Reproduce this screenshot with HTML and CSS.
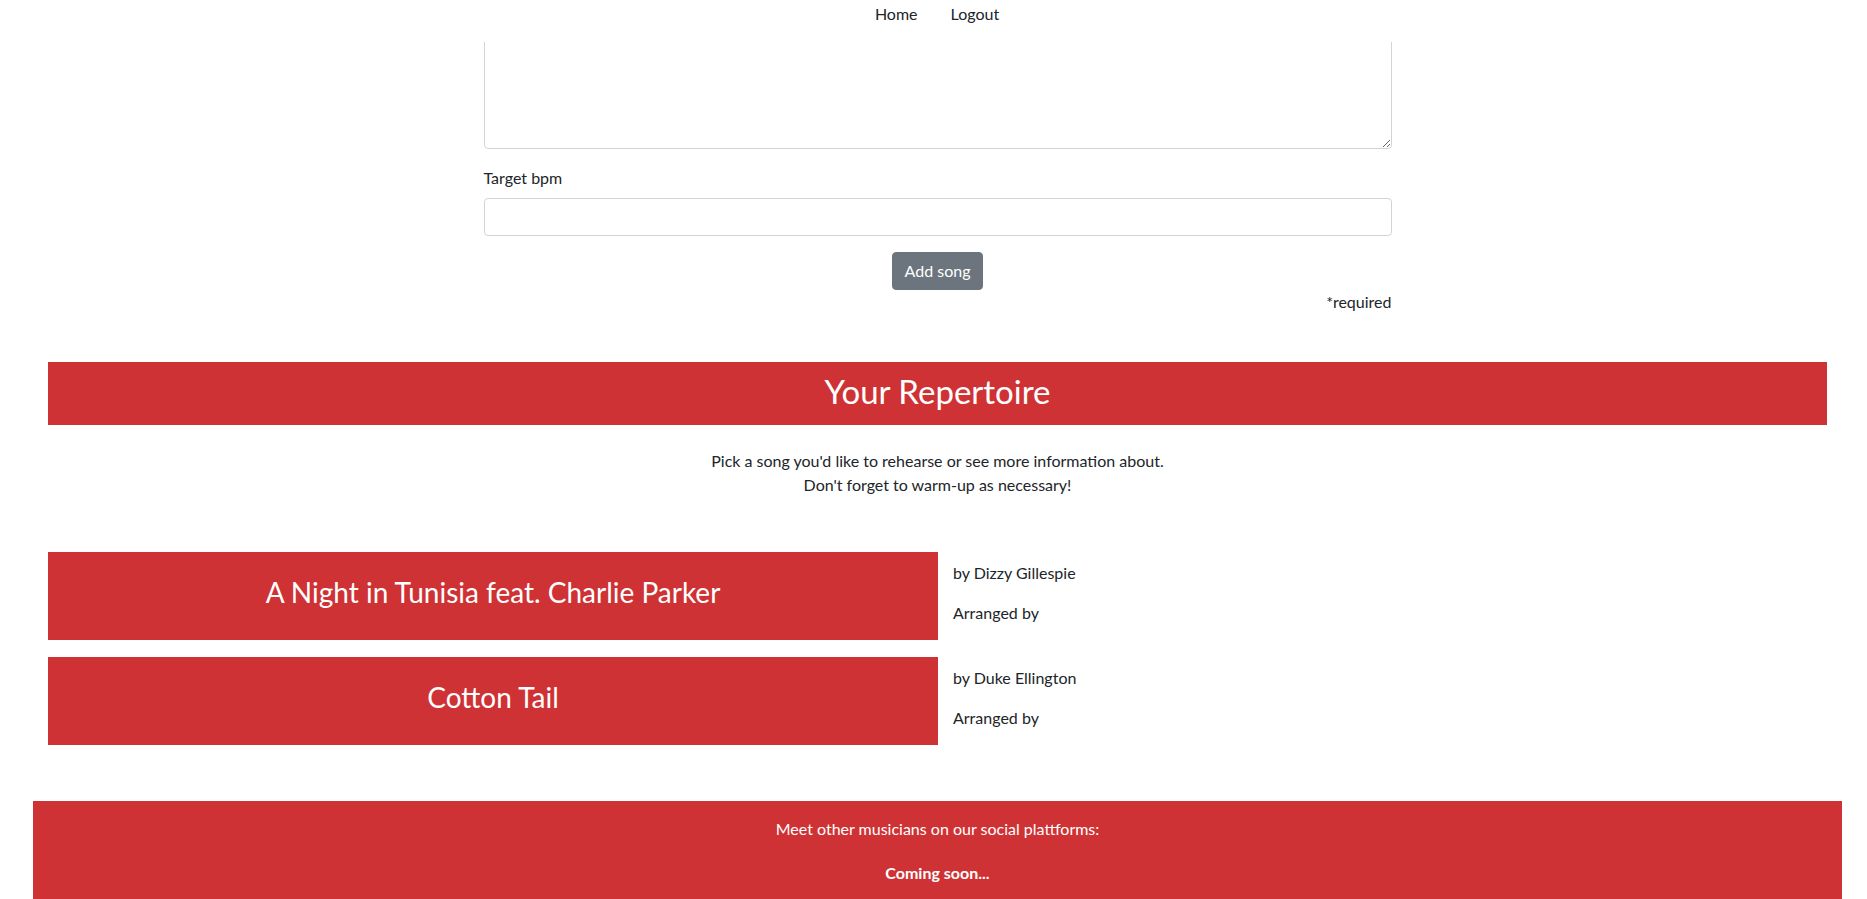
FILE: index.html
```html
<!DOCTYPE html>
<html lang="en">
<head>
<meta charset="utf-8">
<title>Repertoire</title>
<link rel="stylesheet" href="styles.css">
</head>
<body>
<nav class="topnav">
  <a class="nav-link" href="#">Home</a>
  <a class="nav-link" href="#">Logout</a>
</nav>
<main class="page">
  <form class="song-form">
    <div class="field field-notes">
      <div class="textarea-clip">
        <textarea class="form-control notes"></textarea>
      </div>
    </div>
    <div class="field">
      <label class="field-label" for="bpm">Target bpm</label>
      <input class="form-control" id="bpm" type="text">
    </div>
    <div class="form-actions">
      <button type="button" class="btn">Add song</button>
    </div>
    <p class="required">*required</p>
  </form>

  <section class="repertoire">
    <h2 class="band-title">Your Repertoire</h2>
    <p class="intro">Pick a song you'd like to rehearse or see more information about.<br>Don't forget to warm-up as necessary!</p>

    <div class="song-list">
      <div class="song-row">
        <a class="song-card" href="#">A Night in Tunisia feat. Charlie Parker</a>
        <div class="song-info">
          <p>by Dizzy Gillespie</p>
          <p>Arranged by</p>
        </div>
      </div>
      <div class="song-row">
        <a class="song-card" href="#">Cotton Tail</a>
        <div class="song-info">
          <p>by Duke Ellington</p>
          <p>Arranged by</p>
        </div>
      </div>
    </div>
  </section>

  <footer class="site-footer">
    <p>Meet other musicians on our social plattforms:</p>
    <p class="soon">Coming soon...</p>
  </footer>
</main>
</body>
</html>
```
FILE: styles.css
```css
* { box-sizing: border-box; }

html, body {
  margin: 0;
  padding: 0;
  background: #fff;
  overflow: hidden;
}

body {
  font-family: Lato, "Open Sans", "Liberation Sans", sans-serif;
  font-size: 16px;
  line-height: 1.5;
  color: #212529;
}

.topnav {
  height: 42px;
  display: flex;
  justify-content: center;
  gap: 33px;
  padding: 2px 0 0 7px;
  background: #fff;
}

.nav-link {
  color: #212529;
  text-decoration: none;
  font-size: 16px;
}

.page {
  padding-left: 8px;
}

.song-form {
  width: 908px;
  margin: 0 auto;
}

.field { margin-bottom: 16px; }
.field-notes { margin-bottom: 17px; }

.textarea-clip {
  height: 107px;
  overflow: hidden;
}

.form-control {
  display: block;
  width: 100%;
  height: 38px;
  padding: 6px 12px;
  font: inherit;
  color: #495057;
  background: #fff;
  border: 1px solid #ced4da;
  border-radius: 4px;
}

.notes {
  height: 121px;
  margin-top: -14px;
  resize: vertical;
}

.field-label {
  display: block;
  margin-bottom: 8px;
}

.form-actions {
  display: flex;
  justify-content: center;
}

.btn {
  font: inherit;
  color: #fff;
  background: #6c757d;
  border: 1px solid #6c757d;
  border-radius: 4px;
  padding: 6px 12px;
  line-height: 1.5;
}

.required {
  margin: 0;
  text-align: right;
}

.repertoire {
  margin: 48px 40px 0 40px;
}

.band-title {
  margin: 0;
  background: #cf3234;
  color: #fff;
  text-align: center;
  font-weight: 400;
  font-size: 33px;
  line-height: 38px;
  padding: 10px 0 15px;
}

.intro {
  text-align: center;
  margin: 24px 0 0;
}

.song-list {
  margin-top: 55px;
  display: flex;
  flex-direction: column;
  gap: 16px;
}

.song-row {
  display: grid;
  grid-template-columns: 890px 1fr;
}

.song-card {
  display: flex;
  align-items: center;
  justify-content: center;
  height: 88px;
  background: #cf3234;
  color: #fff;
  text-decoration: none;
  font-size: 28px;
  padding-bottom: 9px;
}

.song-info {
  padding: 9px 15px 0;
}

.song-info p {
  margin: 0 0 16px;
}

.site-footer {
  margin: 55px 25px 0 25px;
  background: #cf3234;
  color: #fff;
  text-align: center;
  padding: 16px 0 20px;
  font-size: 16px;
}

.site-footer p {
  margin: 0;
  line-height: 24px;
}

.site-footer .soon {
  margin-top: 20px;
  font-weight: 700;
}
```
